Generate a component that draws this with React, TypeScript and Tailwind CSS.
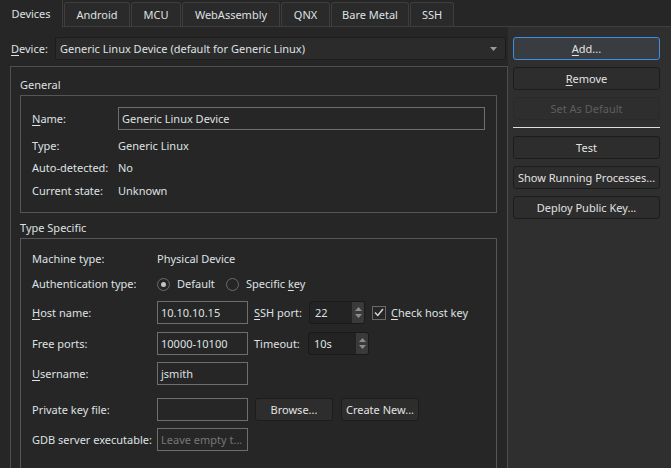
import type { ReactNode } from 'react'

function Btn({ children, primary, disabled, w = 'w-[147px]' }: { children: ReactNode; primary?: boolean; disabled?: boolean; w?: string }) {
  const tone = primary
    ? 'bg-[#393c41] border-[#3d8ede] text-[#e2e2e2]'
    : disabled
      ? 'bg-[#2e2e2e] border-[#2a2a2a] text-[#5e5e5e]'
      : 'bg-[#2d2d2d] border-[#1c1c1c] text-[#e2e2e2]'
  return (
    <div className={`${w} h-[23px] shrink-0 rounded-[3px] border flex items-center justify-center whitespace-nowrap ${tone}`}>
      {children}
    </div>
  )
}

function U({ children }: { children: ReactNode }) {
  return <span className="underline underline-offset-[2px]">{children}</span>
}

function LineEdit({ value, placeholder, w = 'w-[91px]' }: { value?: string; placeholder?: string; w?: string }) {
  return (
    <div className={`${w} h-[23px] shrink-0 border border-[#6e6e6e] bg-[#262626] flex items-center pl-[3px] overflow-hidden whitespace-nowrap`}>
      {value ?? <span className="text-[#777777]">{placeholder}</span>}
    </div>
  )
}

function SpinBox({ value, w }: { value: string; w: string }) {
  return (
    <div className={`${w} h-[23px] shrink-0 rounded-[3px] border border-[#1a1a1a] bg-[#232323] flex overflow-hidden`}>
      <div className="flex-1 flex items-center pl-[5px]">{value}</div>
      <div className="w-[12px] bg-[#3a3a3a] flex flex-col items-center justify-center gap-[3px]">
        <svg width="7" height="4" viewBox="0 0 7 4"><path d="M0 4 L3.5 0 L7 4 Z" fill="#8c8c8c" /></svg>
        <svg width="7" height="4" viewBox="0 0 7 4"><path d="M0 0 L3.5 4 L7 0 Z" fill="#8c8c8c" /></svg>
      </div>
    </div>
  )
}

function Radio({ checked }: { checked?: boolean }) {
  return (
    <div className="w-[13px] h-[13px] rounded-full border border-[#6a6a6a] flex items-center justify-center shrink-0">
      {checked && <div className="w-[5px] h-[5px] rounded-full bg-[#c4c4c4]" />}
    </div>
  )
}

const tabs = [
  { name: 'Android', w: 'w-[66px]' },
  { name: 'MCU', w: 'w-[50px]' },
  { name: 'WebAssembly', w: 'w-[98px]' },
  { name: 'QNX', w: 'w-[49px]' },
  { name: 'Bare Metal', w: 'w-[78px]' },
  { name: 'SSH', w: 'w-[44px]' },
]

export default function App() {
  return (
    <div className="w-[671px] h-[468px] bg-[#2f2f2f] flex flex-col overflow-hidden text-[11px] leading-[16px] whitespace-nowrap text-[#dfe1e3] font-['Noto_Sans',sans-serif]">
      {/* tab bar */}
      <div className="h-[27px] shrink-0 bg-[#262626] border-b border-[#3e3e3e] flex items-end gap-[1px]">
        <div className="w-[63px] h-[27px] -mb-[1px] bg-[#262626] border-r border-[#3e3e3e] flex items-center justify-center">Devices</div>
        {tabs.map(t => (
          <div key={t.name} className={`${t.w} h-[24px] rounded-t-[3px] border border-b-0 border-[#3e3e3e] bg-[#2a2a2a] flex items-center justify-center`}>
            {t.name}
          </div>
        ))}
      </div>

      <div className="flex-1 flex min-h-0">
        {/* left: device page */}
        <div className="w-[508px] bg-[#262626] flex flex-col pl-[10px] pt-[10px]">
          <div className="h-[23px] flex items-center">
            <div className="w-[45px] pl-[1px]"><U>D</U>evice:</div>
            <div className="w-[451px] h-[23px] rounded-[2px] border border-[#1c1c1c] bg-[#2b2b2b] flex items-center pl-[4px] pr-[8px]">
              <span className="flex-1">Generic Linux Device (default for Generic Linux)</span>
              <svg width="7" height="4" viewBox="0 0 7 4"><path d="M0 0 L3.5 4 L7 0 Z" fill="#9a9a9a" /></svg>
            </div>
          </div>

          <div className="mt-[6px] flex-1 border-l border-t border-r border-[#4e4e4e] pt-[10px] pl-[9px] pr-[10px] flex flex-col">
            <div className="h-[16px]">General</div>
            <div className="mt-[2px] border border-[#565656] pl-[11px] pr-[11px] pt-[11px] pb-[10px]">
              <div className="h-[23px] flex items-center">
                <div className="w-[86px]"><U>N</U>ame:</div>
                <LineEdit value="Generic Linux Device" w="flex-1" />
              </div>
              <div className="mt-[5px] h-[22px] flex items-center">
                <div className="w-[86px]">Type:</div>
                <div>Generic Linux</div>
              </div>
              <div className="h-[22px] flex items-center">
                <div className="w-[86px]">Auto-detected:</div>
                <div>No</div>
              </div>
              <div className="mt-[1px] h-[22px] flex items-center">
                <div className="w-[86px]">Current state:</div>
                <div>Unknown</div>
              </div>
            </div>

            <div className="mt-[7px] h-[16px]">Type Specific</div>
            <div className="mt-[2px] flex-1 border-l border-t border-r border-[#565656] pl-[11px] pt-[9px]">
              <div className="h-[22px] flex items-center">
                <div className="w-[125px]">Machine type:</div>
                <div>Physical Device</div>
              </div>
              <div className="mt-[3px] h-[22px] flex items-center">
                <div className="w-[125px]">Authentication type:</div>
                <Radio checked />
                <div className="ml-[7px] w-[49px]">Default</div>
                <Radio />
                <div className="ml-[7px]">Specific <U>k</U>ey</div>
              </div>
              <div className="mt-[6px] h-[23px] flex items-center">
                <div className="w-[125px]"><U>H</U>ost name:</div>
                <LineEdit value="10.10.10.15" />
                <div className="ml-[6px] w-[55px]"><U>S</U>SH port:</div>
                <SpinBox value="22" w="w-[56px]" />
                <div className="ml-[7px] w-[14px] h-[14px] border border-[#6a6a6a] flex items-center justify-center">
                  <svg width="10" height="9" viewBox="0 0 10 9"><path d="M1 4.5 L3.8 7.5 L9 1" fill="none" stroke="#d8d8d8" strokeWidth="1.4" /></svg>
                </div>
                <div className="ml-[5px]"><U>C</U>heck host key</div>
              </div>
              <div className="mt-[8px] h-[23px] flex items-center">
                <div className="w-[125px]">Free ports:</div>
                <LineEdit value="10000-10100" />
                <div className="ml-[6px] w-[54px]">Timeout:</div>
                <SpinBox value="10s" w="w-[61px]" />
              </div>
              <div className="mt-[7px] h-[23px] flex items-center">
                <div className="w-[125px]"><U>U</U>sername:</div>
                <LineEdit value="jsmith" />
              </div>
              <div className="mt-[13px] h-[23px] flex items-center">
                <div className="w-[125px]">Private key file:</div>
                <LineEdit value="" />
                <div className="ml-[7px]"><Btn w="w-[78px]">Browse...</Btn></div>
                <div className="ml-[8px]"><Btn w="w-[78px]">Create New...</Btn></div>
              </div>
              <div className="mt-[7px] h-[23px] flex items-center">
                <div className="w-[125px]">GDB server executable:</div>
                <LineEdit placeholder="Leave empty t..." />
              </div>
            </div>
          </div>
        </div>

        {/* right: actions */}
        <div className="flex-1 pl-[5px] pt-[10px] flex flex-col">
          <Btn primary><U>A</U>dd...</Btn>
          <div className="mt-[7px]"><Btn><U>R</U>emove</Btn></div>
          <div className="mt-[7px]"><Btn disabled>Set As Default</Btn></div>
          <div className="mt-[7px] w-[147px] h-[1px] bg-[#dedede]" />
          <div className="mt-[8px]"><Btn>Test</Btn></div>
          <div className="mt-[7px]"><Btn>Show Running Processes...</Btn></div>
          <div className="mt-[7px]"><Btn>Deploy Public Key...</Btn></div>
        </div>
      </div>
    </div>
  )
}
